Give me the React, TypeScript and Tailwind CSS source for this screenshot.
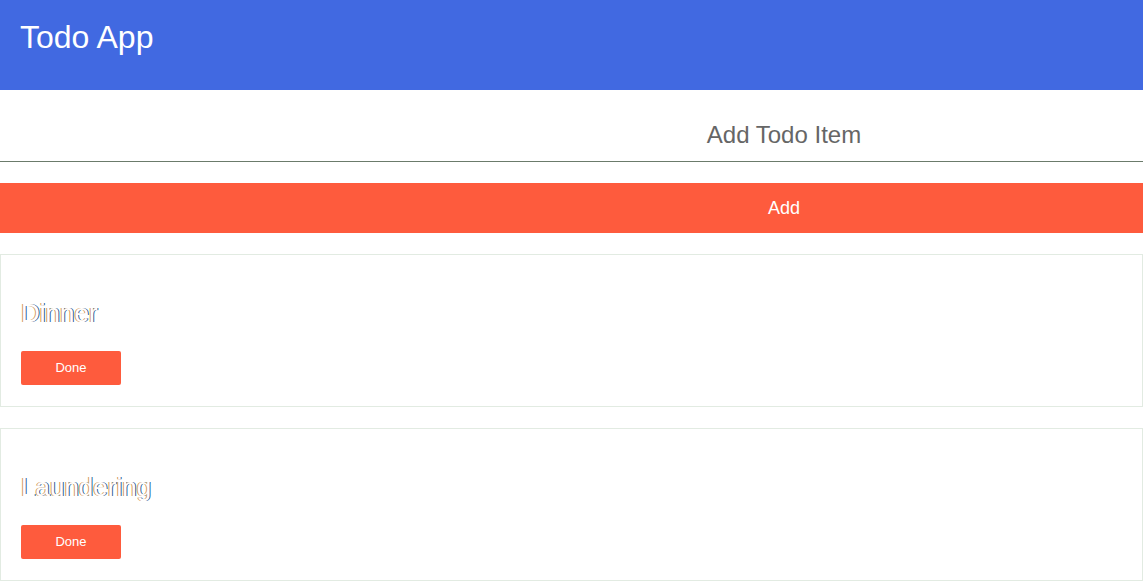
import React from "react";

const todos = ["Dinner", "Laundering"];

export default function App() {
  return (
    <div className="w-full min-h-[585px] bg-white overflow-hidden font-['Liberation_Sans',Arial,sans-serif]">
      <header className="h-[90px] bg-[#4169e1] pl-[20px] pt-[19px]">
        <h1 className="text-[32px] leading-[37px] text-white font-normal">Todo App</h1>
      </header>
      <div className="w-[1568px]">
        <input
          type="text"
          placeholder="Add Todo Item"
          className="mt-[18px] block h-[54px] w-full border-b border-[#6b7b6b] bg-white text-center text-[24px] text-[#555] placeholder:text-[#666] outline-none"
        />
        <button className="mt-[21px] block h-[50px] w-full bg-[#fe5b3d] text-[18px] text-white">
          Add
        </button>
      </div>
      <div className="mt-[21px] flex flex-col gap-[21px]">
        {todos.map((t) => (
          <div
            key={t}
            className="border border-[#e2ebe2] pl-[20px] pt-[43px] pb-[21px]"
          >
            <h2 className="text-[26px] leading-[30px] font-normal text-white [text-shadow:-1px_0_0_#d49a5a,1px_0_0_#2d5d95]">
              {t}
            </h2>
            <button className="mt-[23px] block h-[34px] w-[100px] rounded-[2px] bg-[#fe5b3d] text-[13px] text-white">
              Done
            </button>
          </div>
        ))}
      </div>
    </div>
  );
}
